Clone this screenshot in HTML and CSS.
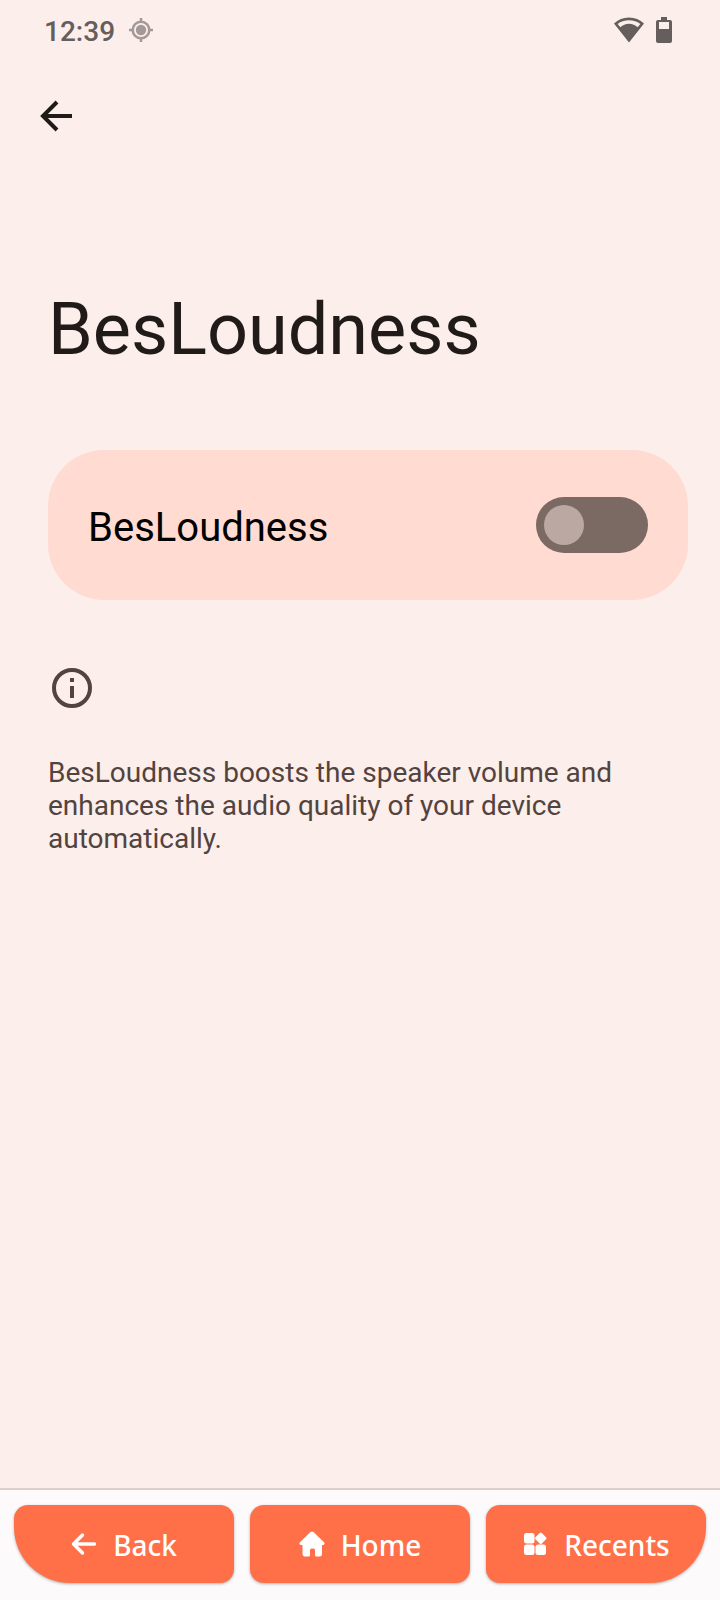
FILE: index.html
```html
<!DOCTYPE html>
<html lang="en">
<head>
    <meta charset="UTF-8">
    <meta name="viewport" content="width=device-width, initial-scale=1.0">
    <title>BesLoudness</title>
    <link rel="stylesheet" href="styles.css">
</head>
<body>
    <div class="status-bar">
        <span class="clock">12:39</span>
        <svg class="location-icon" viewBox="0 0 24 24" width="24" height="24" aria-hidden="true">
            <circle cx="12" cy="12" r="5.200"/>
            <circle class="ring" cx="12" cy="12" r="8.300"/>
            <path class="ring" d="M12 0v4M12 20v4M0 12h4M20 12h4"/>
        </svg>
        <svg class="wifi-icon" viewBox="0 0 30 26" width="30" height="26" aria-hidden="true">
            <path fill-rule="evenodd" d="M15 0.500C9.200 0.500 4 2.700 0 6.500L15 25.500L30 6.500C26 2.700 20.800 0.500 15 0.500ZM15 3.200C19.400 3.200 23.200 4.500 26.400 6.900L23.600 10.200C21.300 8 18.300 6.800 15 6.800S8.700 8 6.400 10.200L3.600 6.900C6.800 4.500 10.600 3.200 15 3.200Z"/>
        </svg>
        <svg class="battery-icon" viewBox="0 0 16 26" width="16" height="26" aria-hidden="true">
            <path fill-rule="evenodd" d="M5 0h6v3h3a2 2 0 0 1 2 2v19a2 2 0 0 1-2 2H2a2 2 0 0 1-2-2V5a2 2 0 0 1 2-2h3zM3 5v7h10V5z"/>
        </svg>
    </div>
    <header>
        <a class="up" href="#" aria-label="Navigate up">
            <svg viewBox="0 0 32 32" width="32" height="32" aria-hidden="true">
                <path d="M32 16H3M17 2L3 16L17 30"/>
            </svg>
        </a>
        <h1>BesLoudness</h1>
    </header>
    <main class="content">
        <div class="card">
            <label for="loudness">BesLoudness</label>
            <input class="switch" type="checkbox" role="switch" id="loudness">
        </div>
        <div class="info">
            <svg viewBox="0 0 48 48" width="48" height="48" aria-hidden="true">
                <circle cx="24" cy="24" r="18"/>
                <path d="M24 14v4M24 22v12"/>
            </svg>
            <p>BesLoudness boosts the speaker volume and enhances the audio quality of your device automatically.</p>
        </div>
    </main>
    <nav>
        <button class="nav-button back" type="button">
            <svg viewBox="0 0 26 26" width="26" height="26" aria-hidden="true">
                <path class="line" d="M23.500 13H2.500M11.500 4L2.500 13L11.500 22"/>
            </svg>
            <span>Back</span>
        </button>
        <button class="nav-button home" type="button">
            <svg viewBox="0 0 26 26" width="26" height="26" aria-hidden="true">
                <path d="M11.500 1.100a2.300 2.300 0 0 1 3 0L25 11.300c1 1.100 0.500 2.700-1 2.700h-1v9a2.500 2.500 0 0 1-2.500 2.500h-3a1.500 1.500 0 0 1-1.500-1.500v-5a1.500 1.500 0 0 0-1.500-1.500h-2a1.500 1.500 0 0 0-1.500 1.500v5a1.500 1.500 0 0 1-1.500 1.500h-3A2.500 2.500 0 0 1 3.500 23v-9h-1.500c-1.500 0-2-1.600-1-2.700z"/>
            </svg>
            <span>Home</span>
        </button>
        <button class="nav-button recents" type="button">
            <svg viewBox="0 0 26 26" width="26" height="26" aria-hidden="true">
                <rect x="2" y="2" width="10.500" height="10.500" rx="2.500"/>
                <rect x="2" y="13.500" width="10.500" height="10.500" rx="2.500"/>
                <rect x="13.500" y="13.500" width="10.500" height="10.500" rx="2.500"/>
                <rect x="14.250" y="2.750" width="9" height="9" rx="1.500" transform="rotate(45 18.750 7.250)"/>
            </svg>
            <span>Recents</span>
        </button>
    </nav>
</body>
</html>
```
FILE: styles.css
```css
* { margin: 0; padding: 0; box-sizing: border-box; }
body { display: flex; flex-direction: column; min-height: 100vh; background-color: #fceeea; color: #201a18; font-family: Roboto, sans-serif; }

.status-bar { display: flex; align-items: center; height: 60px; padding: 0 48px 0 44px; color: #655e5d; fill: #655e5d; }
.clock { padding-top: 3px; font-size: 28px; font-weight: 500; line-height: 32px; }
.location-icon { margin-left: 14px; fill: #a39998; }
.location-icon .ring { fill: none; stroke: #a39998; stroke-width: 2.5; }
.wifi-icon { margin-left: auto; }
.battery-icon { margin-left: 12px; }

header { padding: 40px 40px 0; }
.up { display: block; width: 32px; height: 32px; }
.up svg { display: block; fill: none; stroke: #201a18; stroke-width: 4; }
h1 { margin-top: 156px; padding-left: 8px; font-size: 72px; font-weight: 400; line-height: 84px; }

.content { flex: 1; padding: 78px 32px 40px 48px; }
.card { display: flex; align-items: center; justify-content: space-between; min-height: 150px; padding: 0 40px; border-radius: 56px; background-color: #ffdbd1; }
.card label { padding-top: 6px; color: #000; font-size: 40px; line-height: 48px; }
.switch { appearance: none; width: 112px; height: 56px; padding: 8px; border-radius: 28px; background-color: #7b6964; cursor: pointer; }
.switch::before { content: ""; display: block; width: 40px; height: 40px; border-radius: 50%; background-color: #bca8a2; }
.switch:checked { background-color: #ff7049; }
.switch:checked::before { margin-left: auto; }

.info { padding-top: 64px; color: #53433f; }
.info svg { display: block; fill: none; stroke: #53433f; stroke-width: 4; }
.info p { margin-top: 44px; font-size: 28px; line-height: 33px; }

nav { display: flex; gap: 16px; padding: 15px 14px 17px; border-top: 2px solid #decfcb; background-color: #fdfafb; }
.nav-button { display: flex; flex: 1; align-items: center; justify-content: center; gap: 16px; height: 78px; border: none; border-radius: 14px; background-color: #ff7049; box-shadow: 0 1px 3px rgba(0, 0, 0, 0.3); color: #fff; font-family: "Noto Sans", sans-serif; font-size: 28px; font-weight: 500; cursor: pointer; }
.nav-button svg { fill: #fff; }
.nav-button span { padding-top: 2px; }
.nav-button .line { fill: none; stroke: #fff; stroke-width: 3.5; stroke-linecap: round; stroke-linejoin: round; }
.back { border-bottom-left-radius: 56px; }
.recents { border-bottom-right-radius: 56px; }
```
